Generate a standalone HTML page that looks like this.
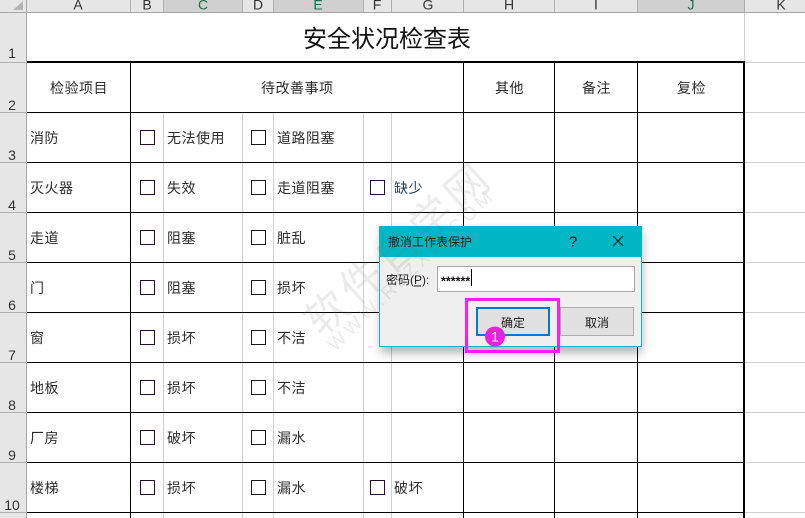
<!DOCTYPE html>
<html><head><meta charset="utf-8">
<style>
html,body{margin:0;padding:0;background:#fff;width:805px;height:518px;overflow:hidden}
svg{position:absolute;left:0;top:0;display:block}
.c{font-family:"Liberation Sans","Noto Sans CJK SC",sans-serif;font-size:14px;letter-spacing:.5px;fill:#2c2c2c}
.h{font-family:"Liberation Sans",sans-serif;font-size:14px;fill:#333;text-anchor:middle}
.s{font-family:"Liberation Sans","Noto Sans CJK SC",sans-serif;font-size:12px;fill:#1a1a1a}
.b{fill:none;stroke:#1a1a1a;stroke-width:1}
</style></head><body>
<svg width="805" height="518" viewBox="0 0 805 518" xmlns="http://www.w3.org/2000/svg">
<defs><filter id="sh" x="-10%" y="-15%" width="120%" height="135%"><feGaussianBlur stdDeviation="5"/></filter></defs>
<!-- headers -->
<rect x="0" y="0" width="805" height="12" fill="#e6e6e6"/>
<rect x="0" y="0" width="26" height="518" fill="#e6e6e6"/>
<rect x="164" y="0" width="78" height="12" fill="#d0d0d0"/>
<rect x="274" y="0" width="89" height="12" fill="#d0d0d0"/>
<rect x="638" y="0" width="106" height="12" fill="#d0d0d0"/>
<polygon points="23,1 23,10 13,10" fill="#b4b4b4"/>
<g fill="#b0b0b0">
<rect x="26" y="0" width="1" height="518" fill="#a6a6a6"/>
<rect x="0" y="12" width="805" height="1" fill="#a6a6a6"/>
<rect x="130" y="0" width="1" height="12"/><rect x="163" y="0" width="1" height="12"/><rect x="242" y="0" width="1" height="12"/><rect x="273" y="0" width="1" height="12"/><rect x="363" y="0" width="1" height="12"/><rect x="391" y="0" width="1" height="12"/><rect x="463" y="0" width="1" height="12"/><rect x="554" y="0" width="1" height="12"/><rect x="637" y="0" width="1" height="12"/><rect x="744" y="0" width="1" height="12"/>
<rect x="0" y="62" width="26" height="1"/><rect x="0" y="112" width="26" height="1"/><rect x="0" y="162" width="26" height="1"/><rect x="0" y="212" width="26" height="1"/><rect x="0" y="262" width="26" height="1"/><rect x="0" y="312" width="26" height="1"/><rect x="0" y="362" width="26" height="1"/><rect x="0" y="412" width="26" height="1"/><rect x="0" y="462" width="26" height="1"/><rect x="0" y="512" width="26" height="1"/>
</g>
<g class="h">
<text class="h" x="78" y="9.5">A</text><text class="h" x="147" y="9.5">B</text><text class="h" x="203" y="9.5" style="fill:#1f6b45">C</text><text class="h" x="258" y="9.5">D</text><text class="h" x="318" y="9.5" style="fill:#1f6b45">E</text><text class="h" x="377" y="9.5">F</text><text class="h" x="428" y="9.5">G</text><text class="h" x="509" y="9.5">H</text><text class="h" x="596" y="9.5">I</text><text class="h" x="691" y="9.5" style="fill:#1f6b45">J</text><text class="h" x="781" y="9.5">K</text>
<text class="h" x="12" y="58">1</text><text class="h" x="12" y="110">2</text><text class="h" x="12" y="160">3</text><text class="h" x="12" y="210">4</text><text class="h" x="12" y="260">5</text><text class="h" x="12" y="310">6</text><text class="h" x="12" y="360">7</text><text class="h" x="12" y="410">8</text><text class="h" x="12" y="460">9</text><text class="h" x="12" y="510">10</text>
</g>
<!-- grey grid -->
<g fill="#d0d0d0">
<rect x="163" y="113" width="1" height="405"/><rect x="242" y="113" width="1" height="405"/><rect x="273" y="113" width="1" height="405"/><rect x="363" y="113" width="1" height="405"/><rect x="391" y="113" width="1" height="405"/>
<rect x="744" y="13" width="1" height="505"/>
<rect x="745" y="62" width="60" height="1"/><rect x="745" y="112" width="60" height="1"/><rect x="745" y="162" width="60" height="1"/><rect x="745" y="212" width="60" height="1"/><rect x="745" y="262" width="60" height="1"/><rect x="745" y="312" width="60" height="1"/><rect x="745" y="362" width="60" height="1"/><rect x="745" y="412" width="60" height="1"/><rect x="745" y="462" width="60" height="1"/><rect x="745" y="512" width="60" height="1"/>
</g>
<!-- black grid -->
<g fill="#000">
<rect x="27" y="61" width="718" height="2"/>
<rect x="27" y="112" width="717" height="1"/><rect x="27" y="162" width="717" height="1"/><rect x="27" y="212" width="717" height="1"/><rect x="27" y="262" width="717" height="1"/><rect x="27" y="312" width="717" height="1"/><rect x="27" y="362" width="717" height="1"/><rect x="27" y="412" width="717" height="1"/><rect x="27" y="462" width="717" height="1"/><rect x="27" y="512" width="717" height="1"/>
<rect x="130" y="62" width="1" height="456"/><rect x="463" y="62" width="1" height="456"/><rect x="554" y="62" width="1" height="456"/><rect x="637" y="62" width="1" height="456"/><rect x="743" y="62" width="2" height="456"/>
</g>
<!-- title + header -->
<text x="303" y="47" style="font-family:'Noto Sans CJK SC',sans-serif;font-size:24px;fill:#111">安全状况检查表</text>
<text class="c" x="50" y="93">检验项目</text><text class="c" x="261" y="93">待改善事项</text><text class="c" x="495" y="93">其他</text><text class="c" x="582" y="93">备注</text><text class="c" x="677" y="93">复检</text>
<!-- rows -->
<text class="c" x="30" y="143">消防</text><text class="c" x="167" y="143">无法使用</text><text class="c" x="277" y="143">道路阻塞</text>
<text class="c" x="30" y="193">灭火器</text><text class="c" x="167" y="193">失效</text><text class="c" x="277" y="193">走道阻塞</text><text class="c" x="394" y="193" style="fill:#1f3a52">缺少</text>
<text class="c" x="30" y="243">走道</text><text class="c" x="167" y="243">阻塞</text><text class="c" x="277" y="243">脏乱</text>
<text class="c" x="30" y="293">门</text><text class="c" x="167" y="293">阻塞</text><text class="c" x="277" y="293">损坏</text>
<text class="c" x="30" y="343">窗</text><text class="c" x="167" y="343">损坏</text><text class="c" x="277" y="343">不洁</text>
<text class="c" x="30" y="393">地板</text><text class="c" x="167" y="393">损坏</text><text class="c" x="277" y="393">不洁</text>
<text class="c" x="30" y="443">厂房</text><text class="c" x="167" y="443">破坏</text><text class="c" x="277" y="443">漏水</text>
<text class="c" x="30" y="493">楼梯</text><text class="c" x="167" y="493">损坏</text><text class="c" x="277" y="493">漏水</text><text class="c" x="394" y="493">破坏</text>
<!-- checkboxes -->
<g class="b">
<rect x="140.5" y="130.5" width="14" height="14" style="stroke:#2a0a3a"/><rect x="251.5" y="130.5" width="14" height="14"/>
<rect x="140.5" y="180.5" width="14" height="14" style="stroke:#2a0a3a"/><rect x="251.5" y="180.5" width="14" height="14"/><rect x="370.5" y="180.5" width="14" height="14" style="stroke:#2a0a3a"/>
<rect x="140.5" y="230.5" width="14" height="14" style="stroke:#2a0a3a"/><rect x="251.5" y="230.5" width="14" height="14"/>
<rect x="140.5" y="280.5" width="14" height="14" style="stroke:#2a0a3a"/><rect x="251.5" y="280.5" width="14" height="14"/>
<rect x="140.5" y="330.5" width="14" height="14" style="stroke:#2a0a3a"/><rect x="251.5" y="330.5" width="14" height="14"/>
<rect x="140.5" y="380.5" width="14" height="14" style="stroke:#2a0a3a"/><rect x="251.5" y="380.5" width="14" height="14"/>
<rect x="140.5" y="430.5" width="14" height="14" style="stroke:#2a0a3a"/><rect x="251.5" y="430.5" width="14" height="14"/>
<rect x="140.5" y="480.5" width="14" height="14" style="stroke:#2a0a3a"/><rect x="251.5" y="480.5" width="14" height="14"/><rect x="370.5" y="480.5" width="14" height="14" style="stroke:#2a0a3a"/>
</g>
<!-- dialog -->
<rect x="381" y="232" width="261" height="121" fill="#000" opacity=".3" filter="url(#sh)"/>
<rect x="379.5" y="226.5" width="262" height="120" fill="#efefef" stroke="#14b4c4"/>
<rect x="379" y="226" width="263" height="31" fill="#00b7c3"/>
<text class="s" x="388" y="246">撤消工作表保护</text>
<text x="573" y="246.5" style="font-family:'Liberation Sans',sans-serif;font-size:15px;fill:#111;text-anchor:middle">?</text>
<path d="M613 236L623 246M623 236L613 246" stroke="#111" stroke-width="1" fill="none"/>
<text class="s" x="386" y="284">密码(P):</text>
<path d="M414 286h7" stroke="#1a1a1a" stroke-width="1"/>
<rect x="437.5" y="266.5" width="197" height="25" fill="#fff" stroke="#a8a8a8"/>
<text x="441" y="285.5" style="font-family:'Liberation Sans',sans-serif;font-size:12.5px;font-weight:700;fill:#111">******</text>
<rect x="471" y="269" width="1" height="17" fill="#000"/>
<rect x="477" y="308" width="72" height="27" fill="#e1e1e1" stroke="#0078d7" stroke-width="2"/>
<text class="s" x="501" y="327">确定</text>
<rect x="560.5" y="307.5" width="73" height="28" fill="#e1e1e1" stroke="#adadad"/>
<text class="s" x="585" y="327">取消</text>
<rect x="466.5" y="299.5" width="92" height="52" fill="none" stroke="#f81df0" stroke-width="3"/>
<circle cx="495" cy="336.5" r="10" fill="#f01fe0"/>
<text x="495" y="341.5" style="font-family:'Liberation Sans',sans-serif;font-size:14px;fill:#fff;text-anchor:middle">1</text>
<!-- watermark -->
<text transform="translate(321,338) rotate(-42)" style="font-family:'Noto Sans CJK SC',sans-serif;font-size:42px;font-weight:400;fill:#777;opacity:.14;letter-spacing:5px">软件自学网</text>
<text transform="translate(335,352) rotate(-44)" style="font-family:'Liberation Sans',sans-serif;font-size:19px;font-weight:400;fill:#777;opacity:.14;letter-spacing:4px">WWW.RJZXW.COM</text>
</svg>
</body></html>
